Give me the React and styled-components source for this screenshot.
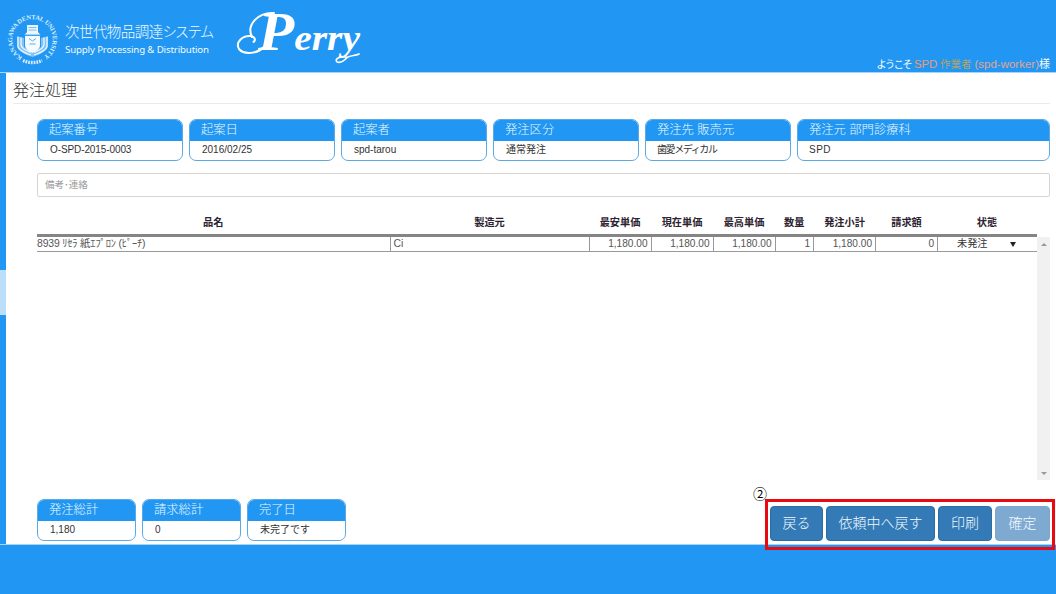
import React from "react";
import styled, { createGlobalStyle } from "styled-components";

const Global = createGlobalStyle`
  * { box-sizing: border-box; }
  html, body { margin: 0; padding: 0; background: #fff; }
  body {
    width: 1056px;
    height: 594px;
    overflow: hidden;
    font-family: "Liberation Sans", "Noto Sans CJK JP", sans-serif;
    font-size: 11px;
    color: #333;
  }
`;

const BLUE = "#2196f3";

const Page = styled.div`
  position: relative;
  display: flex;
  flex-direction: column;
  width: 1056px;
  height: 594px;
  background: ${BLUE};
  white-space: nowrap;
`;

const Header = styled.header`
  display: flex;
  height: 73px;
  padding: 0 6px 0 7px;
  border-bottom: 1px solid #a6d4fa;
`;

const Brand = styled.div`
  display: flex;
  flex-direction: column;
  flex: none;
  width: 172px;
  padding: 20px 0 0 7px;
  color: #f2fbff;
  font-family: "Noto Sans CJK JP", sans-serif;
  font-weight: 300;
`;

const BrandName = styled.div`
  font-size: 14.5px;
  line-height: 21px;
  letter-spacing: -0.55px;
  font-feature-settings: "palt";
`;

const BrandSub = styled.div`
  font-family: "Noto Sans", sans-serif;
  font-size: 9.7px;
  font-weight: 400;
  line-height: 17px;
  letter-spacing: -0.15px;
`;

const Welcome = styled.div`
  margin-left: auto;
  align-self: flex-end;
  height: 16px;
  line-height: 17px;
  font-size: 11.5px;
  color: #fff;
`;

const Tint = styled.span`
  color: ${(p) => p.$color};
  font-size: ${(p) => p.$size || 11.5}px;
  letter-spacing: ${(p) => p.$spacing || 0}px;
`;

const Body = styled.main`
  display: flex;
  height: 472px;
  border-bottom: 1px solid #a6d4fa;
  background: #fff;
`;

const Rail = styled.div`
  flex: none;
  width: 6px;
  padding-top: 197px;
  background: ${BLUE};
`;

const RailHandle = styled.div`
  height: 45px;
  background: #bbdefb;
`;

const Content = styled.div`
  display: flex;
  flex-direction: column;
  flex: 1;
  padding: 0 6px 3px 7px;
`;

const Title = styled.h1`
  margin: 0;
  height: 31px;
  padding-top: 5px;
  border-bottom: 1px solid #eaeaea;
  font-size: 16px;
  line-height: 26px;
  font-weight: 300;
  color: #333;
`;

const Section = styled.div`
  display: flex;
  flex-direction: column;
  flex: 1;
  padding: 15px 0 0 24px;
`;

const CardRow = styled.div`
  display: flex;
  gap: 6px;
`;

const CardBox = styled.div`
  flex: ${(p) => (p.$width ? `0 0 ${p.$width}px` : "1")};
  height: 42px;
  border: 1px solid #5aaae6;
  border-radius: 7px;
  background: #fff;
  overflow: hidden;
`;

const CardHead = styled.div`
  height: 21px;
  padding-left: 11px;
  background: ${BLUE};
  color: #eaf8ff;
  font-size: 12.3px;
  line-height: 21px;
  font-weight: 300;
`;

const CardValue = styled.div`
  padding-left: ${(p) => p.$inset || 12}px;
  font-size: ${(p) => p.$size || 10}px;
  line-height: 18px;
  letter-spacing: ${(p) => p.$spacing || 0}px;
  color: #333;
`;

const Note = styled.div`
  height: 24px;
  margin-top: 12px;
  padding-left: 7px;
  border: 1px solid #d5d5d5;
  border-radius: 2px;
  color: #999;
  font-size: 9.5px;
  line-height: 22px;
`;

const Grid = styled.div`
  display: grid;
  grid-template-columns: 353.5px 199px 62px 62px 62px 38.5px 62px 62px 99px;
  width: 1000px;
`;

const HeadRow = styled(Grid)`
  height: 40px;
  padding-top: 17px;
  border-bottom: 3px solid #858585;
`;

const HeadCell = styled.div`
  padding-right: 1px;
  color: #2c2230;
  font-size: 10.2px;
  line-height: 18px;
  font-weight: 700;
  text-align: center;
`;

const TableBody = styled.div`
  display: flex;
  height: 243px;
`;

const DataRow = styled(Grid)`
  height: 15px;
  border-bottom: 1px solid #999;
`;

const Cell = styled.div`
  height: 14px;
  padding-right: 3px;
  border-right: 1px solid #999;
  font-size: ${(p) => p.$size || 10.4}px;
  line-height: 14px;
  letter-spacing: ${(p) => p.$spacing || 0}px;
  text-align: ${(p) => p.$align || "left"};
  color: #555;
`;

const Status = styled.div`
  display: flex;
  justify-content: space-between;
  align-items: center;
  padding: 0 21px 0 19px;
  color: #333;
  font-size: 10.2px;
  line-height: 14px;
`;

const Scrollbar = styled.div`
  display: flex;
  flex-direction: column;
  justify-content: space-between;
  align-items: center;
  width: 13px;
  padding: 6px 0 5px;
  background: #f1f1f1;
`;

const Triangle = styled.i`
  border: 3px solid transparent;
  border-width: ${(p) => (p.$up ? "0 3px 3px" : `${p.$h || 3}px 3px 0`)};
  border-top-color: ${(p) => (p.$up ? "transparent" : p.$color || "#999")};
  border-bottom-color: ${(p) => (p.$up ? "#999" : "transparent")};
`;

const Bottom = styled.div`
  display: flex;
  justify-content: space-between;
  margin-top: auto;
`;

const Actions = styled.div`
  display: flex;
  gap: 3px;
  padding-top: 7px;
`;

const Button = styled.button`
  width: ${(p) => p.$width}px;
  height: 35px;
  padding: 0 0 1px;
  border: 1px solid ${(p) => (p.$muted ? "#7ba6cf" : "#2e6da4")};
  border-radius: 4px;
  background: ${(p) => (p.$muted ? "#7ea9d1" : "#337ab7")};
  color: #f2fbff;
  font-family: inherit;
  font-size: 14px;
  font-weight: 300;
  line-height: 20px;
`;

const Highlight = styled.div`
  position: absolute;
  left: 765px;
  top: 499px;
  width: 290px;
  height: 51px;
  border: 3px solid #e80a10;
`;

const Marker = styled.div`
  position: absolute;
  left: 753px;
  top: 486px;
  width: 14px;
  height: 14px;
  color: #000;
  font-family: "Noto Sans CJK JP", sans-serif;
  font-size: 14px;
  font-weight: 400;
  line-height: 14px;
`;

const EmblemSvg = styled.svg`
  flex: none;
  margin-top: 13px;
`;

const LogoSvg = styled.svg`
  flex: none;
  margin-left: 6px;
`;

function Emblem() {
  return (
    <EmblemSvg width="51" height="53" viewBox="0 0 51 53" fill="none">
      <defs>
        <path id="ring" d="M15.500 44A20.200 20.200 0 1 1 35.500 44" />
      </defs>
      <text fill="#dcf0fe" fontFamily="Liberation Serif, serif" fontWeight="700" fontSize="6.500">
        <textPath href="#ring" textLength="104">KANAGAWA DENTAL UNIVERSITY</textPath>
      </text>
      <path d="M16 47.500A23 23 0 0 0 35 47.500" stroke="#cfe9fd" strokeWidth="3.400" strokeDasharray="1.800 0.900" />
      <path d="M10 23l7 2v9l8.500 6 8.500-6v-9l7-2v10c0 4-8 9-15.500 11C18 42 10 37 10 33z" fill="#7fc3f8" />
      <path d="M11 24v9c0 3 6 7 13 9M14 24.500v7c0 3 5 6 10 8M40 24v9c0 3-6 7-13 9M37 24.500v7c0 3-5 6-10 8" stroke="#eaf7ff" strokeWidth="1.300" />
      <path d="M18 23h15v9c0 4-3.500 6-7.500 8-4-2-7.500-4-7.500-8z" fill="#f6fbfe" />
      <path d="M20 12h11v7l2.500 3h-16l2.500-3z" fill="#eaf7ff" />
      <path d="M21.500 14.500h8M21.500 17h8" stroke="#6db4ea" strokeWidth="0.900" />
      <path d="M18 22h15M22 25.500l3.500 2.500 3.500-2.500M22.500 31h6" stroke="#5faee9" strokeWidth="1" />
    </EmblemSvg>
  );
}

function Logo() {
  return (
    <LogoSvg width="136" height="72" viewBox="0 0 136 72">
      <g fill="none" stroke="#fff" strokeLinecap="round">
        <path d="M28 47C21 54 8 55 3 49C-1 42 7 35 15 36C19 37 20 40 17.500 42" strokeWidth="2" />
        <path d="M16 37C10 25 22 12 38 13" strokeWidth="2" />
        <path d="M110 57C104 56 98 59 101 62C104 63 108 61 111 57.500C115 55 119 56 123 54" strokeWidth="1.700" />
      </g>
      <text x="22" y="50" fill="#fff" fontFamily="Liberation Serif, serif" fontStyle="italic" fontWeight="700" fontSize="36" textLength="102" lengthAdjust="spacingAndGlyphs">
        <tspan fontSize="54">P</tspan>erry
      </text>
    </LogoSvg>
  );
}

function Card({ label, value, width, size, spacing, inset }) {
  return (
    <CardBox $width={width}>
      <CardHead>{label}</CardHead>
      <CardValue $size={size} $spacing={spacing} $inset={inset}>{value}</CardValue>
    </CardBox>
  );
}

const columns = ["品名", "製造元", "最安単価", "現在単価", "最高単価", "数量", "発注小計", "請求額", "状態"];
const amounts = ["1,180.00", "1,180.00", "1,180.00", "1", "1,180.00", "0"];

export default function App() {
  return (
    <Page>
      <Global />
      <Header>
        <Emblem />
        <Brand>
          <BrandName>次世代物品調達システム</BrandName>
          <BrandSub>Supply Processing &amp; Distribution</BrandSub>
        </Brand>
        <Logo />
        <Welcome>
          <Tint $color="#f4fbff" $size={10.5} $spacing={-1.8}>ようこそ</Tint>
          <Tint $color="#e69c72" $spacing={-0.2}> SPD </Tint>
          <Tint $color="#b9a35f" $size={10.5}>作業者 </Tint>
          <Tint $color="#e2a58f">(spd-worker)</Tint>
          <Tint $color="#f4fbff" $size={11}>様</Tint>
        </Welcome>
      </Header>
      <Body>
        <Rail>
          <RailHandle />
        </Rail>
        <Content>
          <Title>発注処理</Title>
          <Section>
            <CardRow>
              <Card width={146} label="起案番号" value="O-SPD-2015-0003" spacing={-0.1} />
              <Card width={146} label="起案日" value="2016/02/25" />
              <Card width={146} label="起案者" value="spd-tarou" />
              <Card width={146} label="発注区分" value="通常発注" />
              <Card width={146} label="発注先 販売元" value="歯愛メディカル" spacing={-1.4} inset={11} />
              <Card label="発注元 部門診療科" value="SPD" spacing={0.5} inset={11} />
            </CardRow>
            <Note>備考･連絡</Note>
            <HeadRow>
              {columns.map((c) => (
                <HeadCell key={c}>{c}</HeadCell>
              ))}
            </HeadRow>
            <TableBody>
              <DataRow>
                <Cell $spacing={-0.15}>8939 ﾘｾﾗ 紙ｴﾌﾟﾛﾝ (ﾋﾟｰﾁ)</Cell>
                <Cell>&nbsp;Ci</Cell>
                {amounts.map((a, i) => (
                  <Cell key={i} $align="right" $size={10.1}>{a}</Cell>
                ))}
                <Status>
                  <span>未発注</span>
                  <Triangle $color="#222" $h={5} />
                </Status>
              </DataRow>
              <Scrollbar>
                <Triangle $up />
                <Triangle />
              </Scrollbar>
            </TableBody>
            <Bottom>
              <CardRow>
                <Card width={99} label="発注総計" value="1,180" />
                <Card width={99} label="請求総計" value="0" />
                <Card width={99} label="完了日" value="未完了です" />
              </CardRow>
              <Actions>
                <Button $width={53}>戻る</Button>
                <Button $width={109}>依頼中へ戻す</Button>
                <Button $width={54}>印刷</Button>
                <Button $width={55} $muted>確定</Button>
              </Actions>
            </Bottom>
          </Section>
        </Content>
      </Body>
      <Highlight />
      <Marker>②</Marker>
    </Page>
  );
}
